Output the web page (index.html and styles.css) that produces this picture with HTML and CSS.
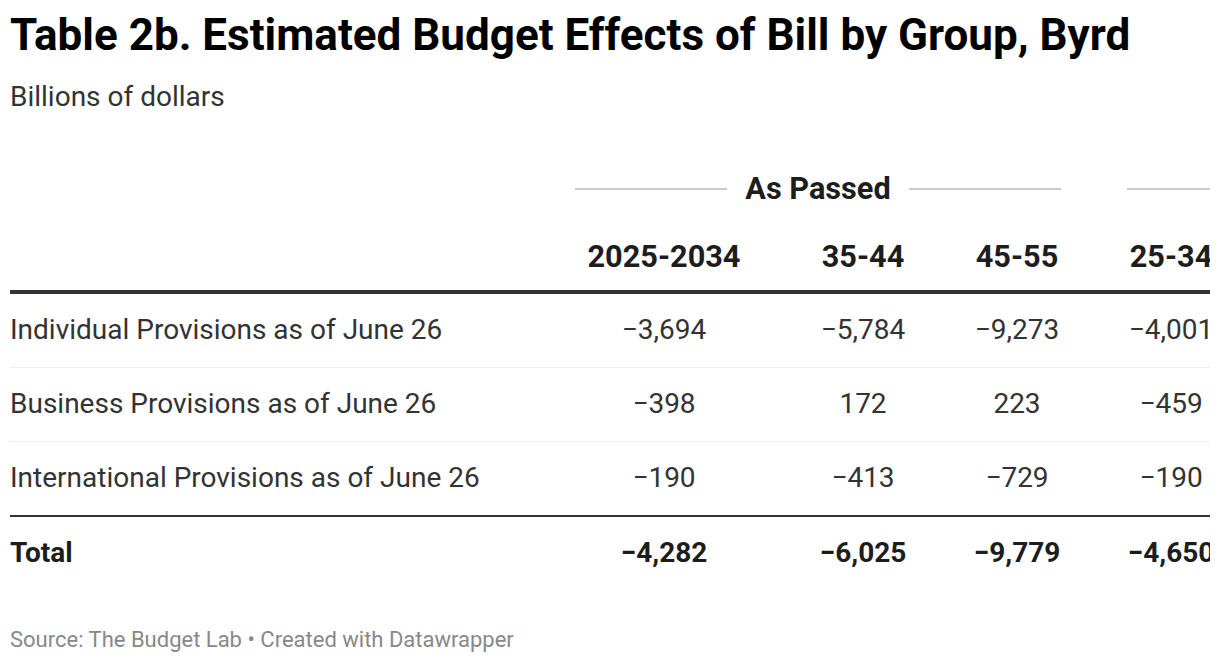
FILE: index.html
```html
<!DOCTYPE html>
<html lang="en">
<head>
<meta charset="utf-8">
<title>Table 2b</title>
<link rel="stylesheet" href="styles.css">
</head>
<body>
<div class="chart">
  <h1 class="title">Table 2b. Estimated Budget Effects of Bill by Group, Byrd</h1>
  <p class="subtitle">Billions of dollars</p>
  <div class="table-wrap">
    <table class="data">
      <colgroup>
        <col class="c-label">
        <col class="c-wide">
        <col class="c-num">
        <col class="c-num">
        <col class="c-num">
      </colgroup>
      <thead>
        <tr class="group-row">
          <th></th>
          <th colspan="3" class="group group-span"><div class="group-inner"><span class="rule"></span><span class="group-name">As Passed</span><span class="rule"></span></div></th>
          <th class="group group-open"><div class="group-inner"><span class="rule"></span></div></th>
        </tr>
        <tr class="col-row">
          <th></th>
          <th>2025-2034</th>
          <th>35-44</th>
          <th>45-55</th>
          <th>25-34</th>
        </tr>
      </thead>
      <tbody>
        <tr>
          <td class="label">Individual Provisions as of June 26</td>
          <td>−3,694</td><td>−5,784</td><td>−9,273</td><td>−4,001</td>
        </tr>
        <tr>
          <td class="label">Business Provisions as of June 26</td>
          <td>−398</td><td>172</td><td>223</td><td>−459</td>
        </tr>
        <tr class="last">
          <td class="label">International Provisions as of June 26</td>
          <td>−190</td><td>−413</td><td>−729</td><td>−190</td>
        </tr>
        <tr class="total">
          <td class="label">Total</td>
          <td>−4,282</td><td>−6,025</td><td>−9,779</td><td>−4,650</td>
        </tr>
      </tbody>
    </table>
  </div>
  <p class="footer">Source: The Budget Lab • Created with Datawrapper</p>
</div>
</body>
</html>
```
FILE: styles.css
```css
html, body {
  margin: 0;
  padding: 0;
  background: #ffffff;
}
body {
  font-family: Roboto, "Liberation Sans", sans-serif;
  color: #1d1d1d;
  overflow: hidden;
}
.chart {
  width: 1200px;
  padding: 0 10px;
}
.title {
  margin: 0;
  padding-top: 9px;
  font-size: 44px;
  line-height: 52px;
  font-weight: 700;
  color: #000;
  white-space: nowrap;
}
.subtitle {
  margin: 0;
  padding-top: 20px;
  font-size: 28px;
  line-height: 32px;
  color: #333;
}
.table-wrap {
  width: 1200px;
  overflow: hidden;
  margin-top: 56px;
}
.data {
  table-layout: fixed;
  width: 1238px;
  border-collapse: collapse;
  font-size: 28px;
  line-height: 30px;
  color: #333;
}
.c-label { width: 532px; }
.c-wide { width: 244px; }
.c-num { width: 154px; }
.data th, .data td {
  padding: 0;
  text-align: center;
  white-space: nowrap;
}
.group-row th {
  height: 40px;
  vertical-align: middle;
}
.data th.group {
  padding: 0 0 0 33px;
}
.data th.group-span {
  padding: 0 33px;
}
.group-inner {
  display: flex;
  align-items: center;
}
.rule {
  flex: 1;
  height: 2px;
  background: #cccccc;
}
.group-name {
  padding: 0 18px;
  font-weight: 700;
  color: #1d1d1d;
  font-size: 30.7px;
  line-height: 40px;
}
.col-row th {
  padding: 33px 0 18px;
  vertical-align: bottom;
  font-weight: 700;
  font-size: 30.7px;
  line-height: 30px;
  color: #1d1d1d;
  border-bottom: 4px solid #333;
}
.data tbody td {
  padding: 21px 0 22px;
  border-bottom: 1px solid #eeeeee;
}
.data td.label {
  text-align: left;
}
.data tr.last td {
  border-bottom: 2px solid #333;
}
.data tr.total td {
  border-bottom: none;
  font-weight: 700;
  color: #1d1d1d;
}
.footer {
  margin: 0;
  padding-top: 36px;
  font-size: 22px;
  line-height: 28px;
  color: #888888;
}
```
